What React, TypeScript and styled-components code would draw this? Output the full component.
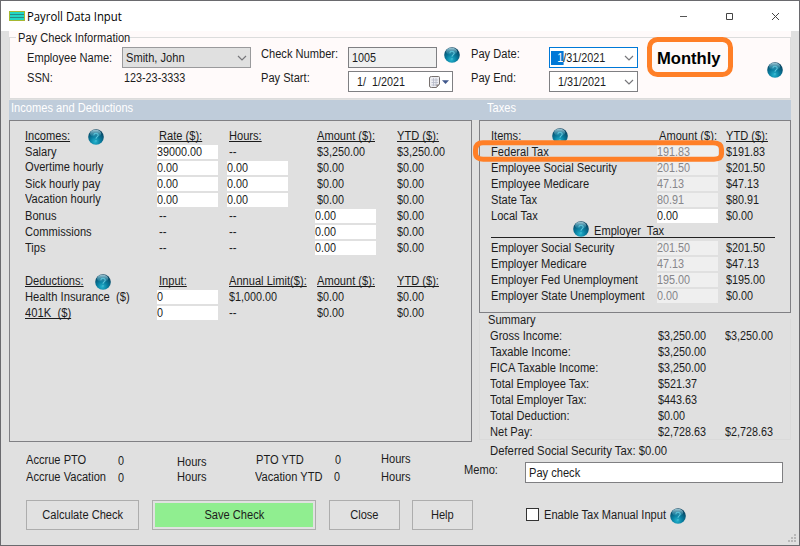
import React from "react";
import styled, { createGlobalStyle, css } from "styled-components";

const Global = createGlobalStyle`
  * { box-sizing: border-box; }
  body { margin: 0; background: #e0e0e0; }
`;

const ui = '"Liberation Sans", Arial, sans-serif';

const Window = styled.div`
  position: relative;
  width: 800px;
  height: 546px;
  overflow: hidden;
  background: #e0e0e0;
  border: 1px solid #6a6a6e;
  font: 12px/16px ${ui};
  color: #1c1c1c;
  display: flex;
  flex-direction: column;
`;

const TitleBar = styled.header`
  height: 30px;
  flex: none;
  background: #fff;
  display: flex;
  align-items: center;
  padding: 0 19px 0 8px;
`;
const Title = styled.h1`
  margin: 0 auto 0 2px;
  font: 400 12px/16px "Open Sans", "Noto Sans", sans-serif;
  color: #000;
  padding-top: 1px;
  transform: scaleX(0.945);
  transform-origin: 0 50%;
`;
const Controls = styled.div`
  display: flex;
  gap: 37px;
  svg { display: block; }
`;

/* Condensed form text: the advance widths are narrower than the face's own. */
const Text = styled.span<{ $sx?: number; $u?: boolean }>`
  display: inline-block;
  white-space: pre;
  transform: scaleX(${(p) => p.$sx ?? 0.925});
  transform-origin: 0 50%;
  line-height: 16px;
  ${(p) => p.$u && css`text-decoration: underline; text-underline-offset: 1px; text-decoration-thickness: 1px; text-decoration-skip-ink: none;`}
`;

const Info = styled.section`
  height: 68px;
  flex: none;
  margin: 0 8px;
  background: #fffafa;
  display: flex;
  flex-direction: column;
`;
const Legend = styled.div`
  height: 12px;
  display: flex;
  align-items: center;
  padding-left: 9px;
  margin-bottom: -6px;
  &::after { content: ""; flex: 1; height: 1px; background: #dcdcdc; }
  &::before { content: ""; width: 7px; height: 1px; background: #dcdcdc; margin-left: -9px; margin-right: 2px; }
`;
const LegendText = styled.div<{ $w: number }>`
  width: ${(p) => p.$w}px;
  flex: none;
  height: 16px;
  margin-top: 1px;
`;
const InfoBody = styled.div`
  flex: 1;
  display: flex;
  border: 1px solid #dcdcdc;
  border-top: 0;
  padding: 4px 0 0 17px;
`;
const Col = styled.div<{ $w: number; $top?: number; $gap?: number }>`
  width: ${(p) => p.$w}px;
  flex: none;
  display: flex;
  flex-direction: column;
  gap: ${(p) => p.$gap ?? 3}px;
  padding-top: ${(p) => p.$top ?? 0}px;
`;
const Field = styled.div<{ $w: number; $bg?: string; $line?: string; $pl?: number }>`
  width: ${(p) => p.$w}px;
  height: 21px;
  flex: none;
  border: 1px solid ${(p) => p.$line ?? "#7f7f82"};
  background: ${(p) => p.$bg ?? "#fff"};
  display: flex;
  align-items: center;
  padding: 0 3px 0 ${(p) => p.$pl ?? 3}px;
  & > svg { margin-left: auto; flex: none; }
`;
const Selected = styled.span`
  background: #0078d7;
  color: #fff;
  display: inline-block;
  line-height: 14px;
  padding-left: 7px;
`;
const Period = styled.strong`
  font: 700 16.6px/21px ${ui};
  color: #000;
`;

const Band = styled.div`
  height: 20px;
  flex: none;
  margin: 1px 8px 0;
  background: #bfccda;
  color: #fff;
  display: grid;
  grid-template-columns: 476px 1fr;
  padding-left: 2px;
  line-height: 14px;
`;

const Main = styled.div`
  flex: 1;
  display: flex;
  gap: 7px;
  padding: 0 8px;
`;
const Left = styled.div`
  width: 463px;
  flex: none;
`;
const Right = styled.div`
  width: 312px;
  flex: none;
`;
const IncomePanel = styled.section`
  height: 322px;
  border: 1px solid #808084;
  padding: 7px 0 0 15px;
`;
const TaxPanel = styled.section`
  height: 193px;
  border: 1px solid #808084;
  padding: 7px 0 0 11px;
`;
const Row = styled.div`
  height: 16px;
  display: grid;
  grid-template-columns: 132px 70px 88px 82px 60px;
  white-space: nowrap;
`;
const TaxRow = styled(Row)`
  grid-template-columns: 166px 69px 60px;
`;
const SumRow = styled(Row)`
  grid-template-columns: 168px 67px 60px;
`;
const Cell = styled.div<{ $pad?: number; $lift?: number }>`
  height: 16px;
  padding-left: ${(p) => p.$pad ?? 0}px;
  margin-top: ${(p) => -(p.$lift ?? 0)}px;
`;
const Entry = styled.div<{ $off?: boolean }>`
  width: 61px;
  height: 14px;
  margin-top: 1px;
  background: ${(p) => (p.$off ? "#efefef" : "#fff")};
  color: ${(p) => (p.$off ? "#86868a" : "#1c1c1c")};
  & > span { margin-top: -1px; display: block; width: max-content; }
`;
const HelpSlot = styled.span<{ $ml?: number; $mt?: number }>`
  display: inline-block;
  vertical-align: top;
  margin-left: ${(p) => p.$ml ?? 0}px;
  margin-top: ${(p) => p.$mt ?? 0}px;
  height: 16px;
  svg { display: block; }
`;
const HeadLabel = styled.div<{ $w: number }>`
  display: inline-block;
  width: ${(p) => p.$w}px;
`;
const Spacer = styled.div<{ $h: number }>`
  height: ${(p) => p.$h}px;
`;
const EmployerHead = styled.div`
  display: flex;
  height: 14px;
  width: 284px;
  border-bottom: 1px solid #222;
  padding-left: 82px;
  margin-bottom: 2px;
`;
const Summary = styled.section`
  height: 121px;
  margin-top: 6px;
  border: 1px solid #dadada;
  border-top: 0;
  padding: 1px 0 0 10px;
`;
const SummaryTitle = styled.div`
  height: 16px;
  margin: -8px 0 0 -2px;
`;
const Accruals = styled.div`
  height: 58px;
  padding: 10px 0 0 17px;
  display: grid;
  grid-template-columns: 92px 59px 78px 79px 47px 60px;
  grid-auto-rows: 17px;
  align-content: start;
`;
const Buttons = styled.div`
  display: flex;
  padding-left: 17px;
`;
const Button = styled.button<{ $w: number; $ml?: number; $main?: boolean }>`
  width: ${(p) => p.$w}px;
  height: 30px;
  margin-left: ${(p) => p.$ml ?? 0}px;
  padding: 0;
  flex: none;
  border: 1px solid #adadad;
  background: ${(p) => (p.$main ? "#90ee90" : "#e1e1e1")};
  box-shadow: ${(p) => (p.$main ? "inset 0 0 0 2px #e1e1e1" : "none")};
  font: 12px/16px ${ui};
  color: #1c1c1c;
  ${Text} { transform-origin: 50% 50%; }
`;
const MemoRow = styled.div`
  display: flex;
  margin: 3px 0 0 -15px;
  height: 22px;
`;
const CheckRow = styled.div`
  display: flex;
  padding: 23px 0 0 47px;
`;
const Check = styled.span`
  width: 13px;
  height: 13px;
  border: 1px solid #333;
  background: #fff;
  margin: 1px 5px 0 0;
`;
const Overlay = styled.svg`
  position: absolute;
  left: -1px;
  top: -1px;
  pointer-events: none;
`;
const Grip = styled.svg`
  position: absolute;
  right: 2px;
  bottom: 2px;
`;

function Help() {
  return (
    <svg width="16" height="16" viewBox="0 0 16 16">
      <defs>
        <radialGradient id="orb" cx="45%" cy="80%" r="75%">
          <stop offset="0" stopColor="#24b4ce" />
          <stop offset=".45" stopColor="#087c9e" />
          <stop offset="1" stopColor="#083f5c" />
        </radialGradient>
        <linearGradient id="gloss" x1="0" y1="0" x2="0" y2="1">
          <stop offset="0" stopColor="#b7dbe6" stopOpacity=".9" />
          <stop offset="1" stopColor="#3aa3bf" stopOpacity=".15" />
        </linearGradient>
      </defs>
      <circle cx="8" cy="8" r="7.8" fill="url(#orb)" />
      <ellipse cx="7.6" cy="4.4" rx="5.6" ry="3.7" fill="url(#gloss)" />
      <path d="M5.8 6.2C6 3.6 10.3 3.7 10.2 6.3C10.1 7.9 8 7.9 8 9.7M8 11.3V12.6" fill="none" stroke="#5cc4da" strokeWidth="1.1" />
    </svg>
  );
}

const Chevron = () => (
  <svg width="10" height="6" viewBox="0 0 10 6">
    <path d="M1 1L5 5L9 1" fill="none" stroke="#77777b" strokeWidth="1.2" />
  </svg>
);

const Calendar = () => (
  <svg width="20" height="14" viewBox="0 0 20 14">
    <path d="M2.5 1.5H9.5Q10.5 1.5 10.5 2.5V9L7.5 12.5H2.5Q.5 12.5 .5 11V3Q.5 1.5 2.5 1.5Z" fill="#eeeef2" stroke="#77716f" />
    <path d="M2.5 5H9M2.5 7.5H9M2.5 10H8M4.5 3V11M7 3V11" stroke="#b4b8c6" strokeWidth=".8" />
    <path d="M7.5 12.5V9.5H10.5Z" fill="#8a8280" />
    <path d="M13 5.3H20L16.5 9Z" fill="#40588c" />
  </svg>
);

const Num = ({ children }: { children: string }) => <Text $sx={children === "--" ? 0.95 : 0.9}>{children}</Text>;
const Heading = ({ children }: { children: string }) => <Text $u>{children}</Text>;

type Val = { v: string; edit?: boolean };
const t = (v: string): Val => ({ v });
const e = (v: string): Val => ({ v, edit: true });

const incomes: [string, Val[], number][] = [
  ["Salary", [e("39000.00"), t("--"), t("$3,250.00"), t("$3,250.00")], 0],
  ["Overtime hourly", [e("0.00"), e("0.00"), t("$0.00"), t("$0.00")], 1],
  ["Sick hourly pay", [e("0.00"), e("0.00"), t("$0.00"), t("$0.00")], 0],
  ["Vacation hourly", [e("0.00"), e("0.00"), t("$0.00"), t("$0.00")], 1],
  ["Bonus", [t("--"), t("--"), e("0.00"), t("$0.00")], 0],
  ["Commissions", [t("--"), t("--"), e("0.00"), t("$0.00")], 0],
  ["Tips", [t("--"), t("--"), e("0.00"), t("$0.00")], 0],
];
const deductions: [string, Val[], boolean][] = [
  ["Health Insurance  ($)", [e("0"), t("$1,000.00"), t("$0.00"), t("$0.00")], false],
  ["401K  ($)", [e("0"), t("--"), t("$0.00"), t("$0.00")], true],
];
const pads = [2, 2, 2, 0];

const Values = ({ items }: { items: Val[] }) => (
  <>
    {items.map((c, i) =>
      c.edit ? (
        <Entry key={i}><Num>{c.v}</Num></Entry>
      ) : (
        <Cell key={i} $pad={pads[i]}><Num>{c.v}</Num></Cell>
      ),
    )}
  </>
);

const TaxLine = ({ name, value, editable }: { name: string; value: string; editable?: boolean }) => (
  <TaxRow>
    <Cell><Text>{name}</Text></Cell>
    <Entry $off={!editable}><Num>{value}</Num></Entry>
    <Cell><Num>{"$" + value}</Num></Cell>
  </TaxRow>
);

const summary = [
  ["Gross Income:", "$3,250.00", "$3,250.00"],
  ["Taxable Income:", "$3,250.00", ""],
  ["FICA Taxable Income:", "$3,250.00", ""],
  ["Total Employee Tax:", "$521.37", ""],
  ["Total Employer Tax:", "$443.63", ""],
  ["Total Deduction:", "$0.00", ""],
  ["Net Pay:", "$2,728.63", "$2,728.63"],
];

export default function App() {
  return (
    <>
      <Global />
      <Window>
        <TitleBar>
          <svg width="16" height="10" viewBox="0 0 16 10">
            <rect x=".5" y=".5" width="15" height="9" fill="#22d8c4" stroke="#a6b832" />
            <path d="M1 3.500H15M1 6.500H15" stroke="#278b86" strokeWidth="1" />
          </svg>
          <Title>Payroll Data Input</Title>
          <Controls>
            <svg width="9" height="9"><path d="M1 4.5H8" stroke="#555" /></svg>
            <svg width="9" height="9"><path d="M1.5 1.5H7.5V7.5H1.5Z" fill="none" stroke="#444" /></svg>
            <svg width="9" height="9"><path d="M1 1L8 8M8 1L1 8" stroke="#444" /></svg>
          </Controls>
        </TitleBar>

        <Info>
          <Legend>
            <LegendText $w={110}><Text>Pay Check Information</Text></LegendText>
          </Legend>
          <InfoBody>
            <Col $w={95} $top={9} $gap={4}>
              <Text>Employee Name:</Text>
              <Text>SSN:</Text>
            </Col>
            <Col $w={139} $top={6} $gap={2}>
              <Field $w={129} $bg="#e0e0e0" $line="#9a9a9c"><Text>Smith, John</Text><Chevron /></Field>
              <Cell $pad={2}><Num>123-23-3333</Num></Cell>
            </Col>
            <Col $w={87} $top={5} $gap={8}>
              <Text>Check Number:</Text>
              <Text>Pay Start:</Text>
            </Col>
            <Col $w={96} $top={6}>
              <Field $w={89} $bg="#f0f0f0"><Num>1005</Num></Field>
              <Field $w={105}><Cell $pad={5}><Num>1/  1/2021</Num></Cell><Calendar /></Field>
            </Col>
            <Col $w={27} $top={6}><Help /></Col>
            <Col $w={78} $top={5} $gap={8}>
              <Text>Pay Date:</Text>
              <Text>Pay End:</Text>
            </Col>
            <Col $w={108} $top={6}>
              <Field $w={89} $line="#0078d7" $pl={1}><Text $sx={0.9}><Selected>1</Selected>/31/2021</Text><Chevron /></Field>
              <Field $w={89}><Cell $pad={5}><Num>1/31/2021</Num></Cell><Chevron /></Field>
            </Col>
            <Col $w={110} $top={7}><Period>Monthly</Period></Col>
            <Col $w={16} $top={21}><Help /></Col>
          </InfoBody>
        </Info>

        <Band>
          <Text>Incomes and Deductions</Text>
          <Text>Taxes</Text>
        </Band>

        <Main>
          <Left>
            <IncomePanel>
              <Row>
                <Cell><HeadLabel $w={63}><Heading>Incomes:</Heading></HeadLabel><HelpSlot $mt={1}><Help /></HelpSlot></Cell>
                <Cell $pad={2}><Heading>Rate ($):</Heading></Cell>
                <Cell $pad={2}><Heading>Hours:</Heading></Cell>
                <Cell $pad={2}><Heading>Amount ($):</Heading></Cell>
                <Cell><Heading>YTD ($):</Heading></Cell>
              </Row>
              {incomes.map(([name, vals, lift]) => (
                <Row key={name}>
                  <Cell $lift={lift}><Text>{name}</Text></Cell>
                  <Values items={vals} />
                </Row>
              ))}
              <Spacer $h={17} />
              <Row>
                <Cell><HeadLabel $w={70}><Heading>Deductions:</Heading></HeadLabel><HelpSlot $mt={1}><Help /></HelpSlot></Cell>
                <Cell $pad={2}><Heading>Input:</Heading></Cell>
                <Cell $pad={2}><Heading>Annual Limit($):</Heading></Cell>
                <Cell $pad={2}><Heading>Amount ($):</Heading></Cell>
                <Cell><Heading>YTD ($):</Heading></Cell>
              </Row>
              {deductions.map(([name, vals, u]) => (
                <Row key={name}>
                  <Cell><Text $u={u} $sx={0.935}>{name}</Text></Cell>
                  <Values items={vals} />
                </Row>
              ))}
            </IncomePanel>
            <Accruals>
              <Cell><Text>Accrue PTO</Text></Cell>
              <Cell $lift={-1}><Num>0</Num></Cell>
              <Cell $lift={-2}><Text>Hours</Text></Cell>
              <Cell $pad={1}><Text>PTO YTD</Text></Cell>
              <Cell $pad={1}><Num>0</Num></Cell>
              <Cell $lift={1}><Text>Hours</Text></Cell>
              <Cell><Text>Accrue Vacation</Text></Cell>
              <Cell $lift={-1}><Num>0</Num></Cell>
              <Cell><Text>Hours</Text></Cell>
              <Cell><Text>Vacation YTD</Text></Cell>
              <Cell><Num>0</Num></Cell>
              <Cell><Text>Hours</Text></Cell>
            </Accruals>
            <Buttons>
              <Button $w={113}><Text>Calculate Check</Text></Button>
              <Button $w={164} $ml={13} $main><Text>Save Check</Text></Button>
              <Button $w={71} $ml={13}><Text>Close</Text></Button>
              <Button $w={61} $ml={12}><Text>Help</Text></Button>
            </Buttons>
          </Left>

          <Right>
            <TaxPanel>
              <TaxRow>
                <Cell><HeadLabel $w={61}><Heading>Items:</Heading></HeadLabel><HelpSlot><Help /></HelpSlot></Cell>
                <Cell $pad={2}><Heading>Amount ($):</Heading></Cell>
                <Cell><Heading>YTD ($):</Heading></Cell>
              </TaxRow>
              <TaxLine name="Federal Tax" value="191.83" />
              <TaxLine name="Employee Social Security" value="201.50" />
              <TaxLine name="Employee Medicare" value="47.13" />
              <TaxLine name="State Tax" value="80.91" />
              <TaxLine name="Local Tax" value="0.00" editable />
              <EmployerHead>
                <HelpSlot $mt={-3}><Help /></HelpSlot>
                <HelpSlot $ml={5} $mt={-1}><Text>Employer  Tax</Text></HelpSlot>
              </EmployerHead>
              <TaxLine name="Employer Social Security" value="201.50" />
              <TaxLine name="Employer Medicare" value="47.13" />
              <TaxLine name="Employer Fed Unemployment" value="195.00" />
              <TaxLine name="Employer State Unemployment" value="0.00" />
            </TaxPanel>
            <Summary>
              <SummaryTitle><Text>Summary</Text></SummaryTitle>
              {summary.map(([name, now, ytd]) => (
                <SumRow key={name}>
                  <Cell><Text>{name}</Text></Cell>
                  <Cell><Num>{now}</Num></Cell>
                  <Cell><Num>{ytd}</Num></Cell>
                </SumRow>
              ))}
            </Summary>
            <Cell $pad={11} $lift={-3}><Text $sx={0.942}>Deferred Social Security Tax: $0.00</Text></Cell>
            <MemoRow>
              <Col $w={61}><Text>Memo:</Text></Col>
              <Field $w={258}><Text>Pay check</Text></Field>
            </MemoRow>
            <CheckRow>
              <Check />
              <HeadLabel $w={126}><Text>Enable Tax Manual Input</Text></HeadLabel>
              <HelpSlot $mt={1}><Help /></HelpSlot>
            </CheckRow>
          </Right>
        </Main>

        <Overlay width="800" height="546">
          <g fill="none" stroke="#ff7f27" strokeWidth="5">
            <rect x="649.5" y="39.5" width="81" height="35" rx="8" />
            <path d="M483 142.8H713Q721.5 143 721.5 149V154Q721.5 159 714 159.200H484Q475.500 159.500 475.500 153V150Q475.500 142.800 483 142.800Z" />
          </g>
        </Overlay>
        <Grip width="10" height="10">
          <g fill="#b8b8b8">
            <rect x="7" y="1" width="2" height="2" />
            <rect x="4" y="4" width="2" height="2" /><rect x="7" y="4" width="2" height="2" />
            <rect x="1" y="7" width="2" height="2" /><rect x="4" y="7" width="2" height="2" /><rect x="7" y="7" width="2" height="2" />
          </g>
        </Grip>
      </Window>
    </>
  );
}
